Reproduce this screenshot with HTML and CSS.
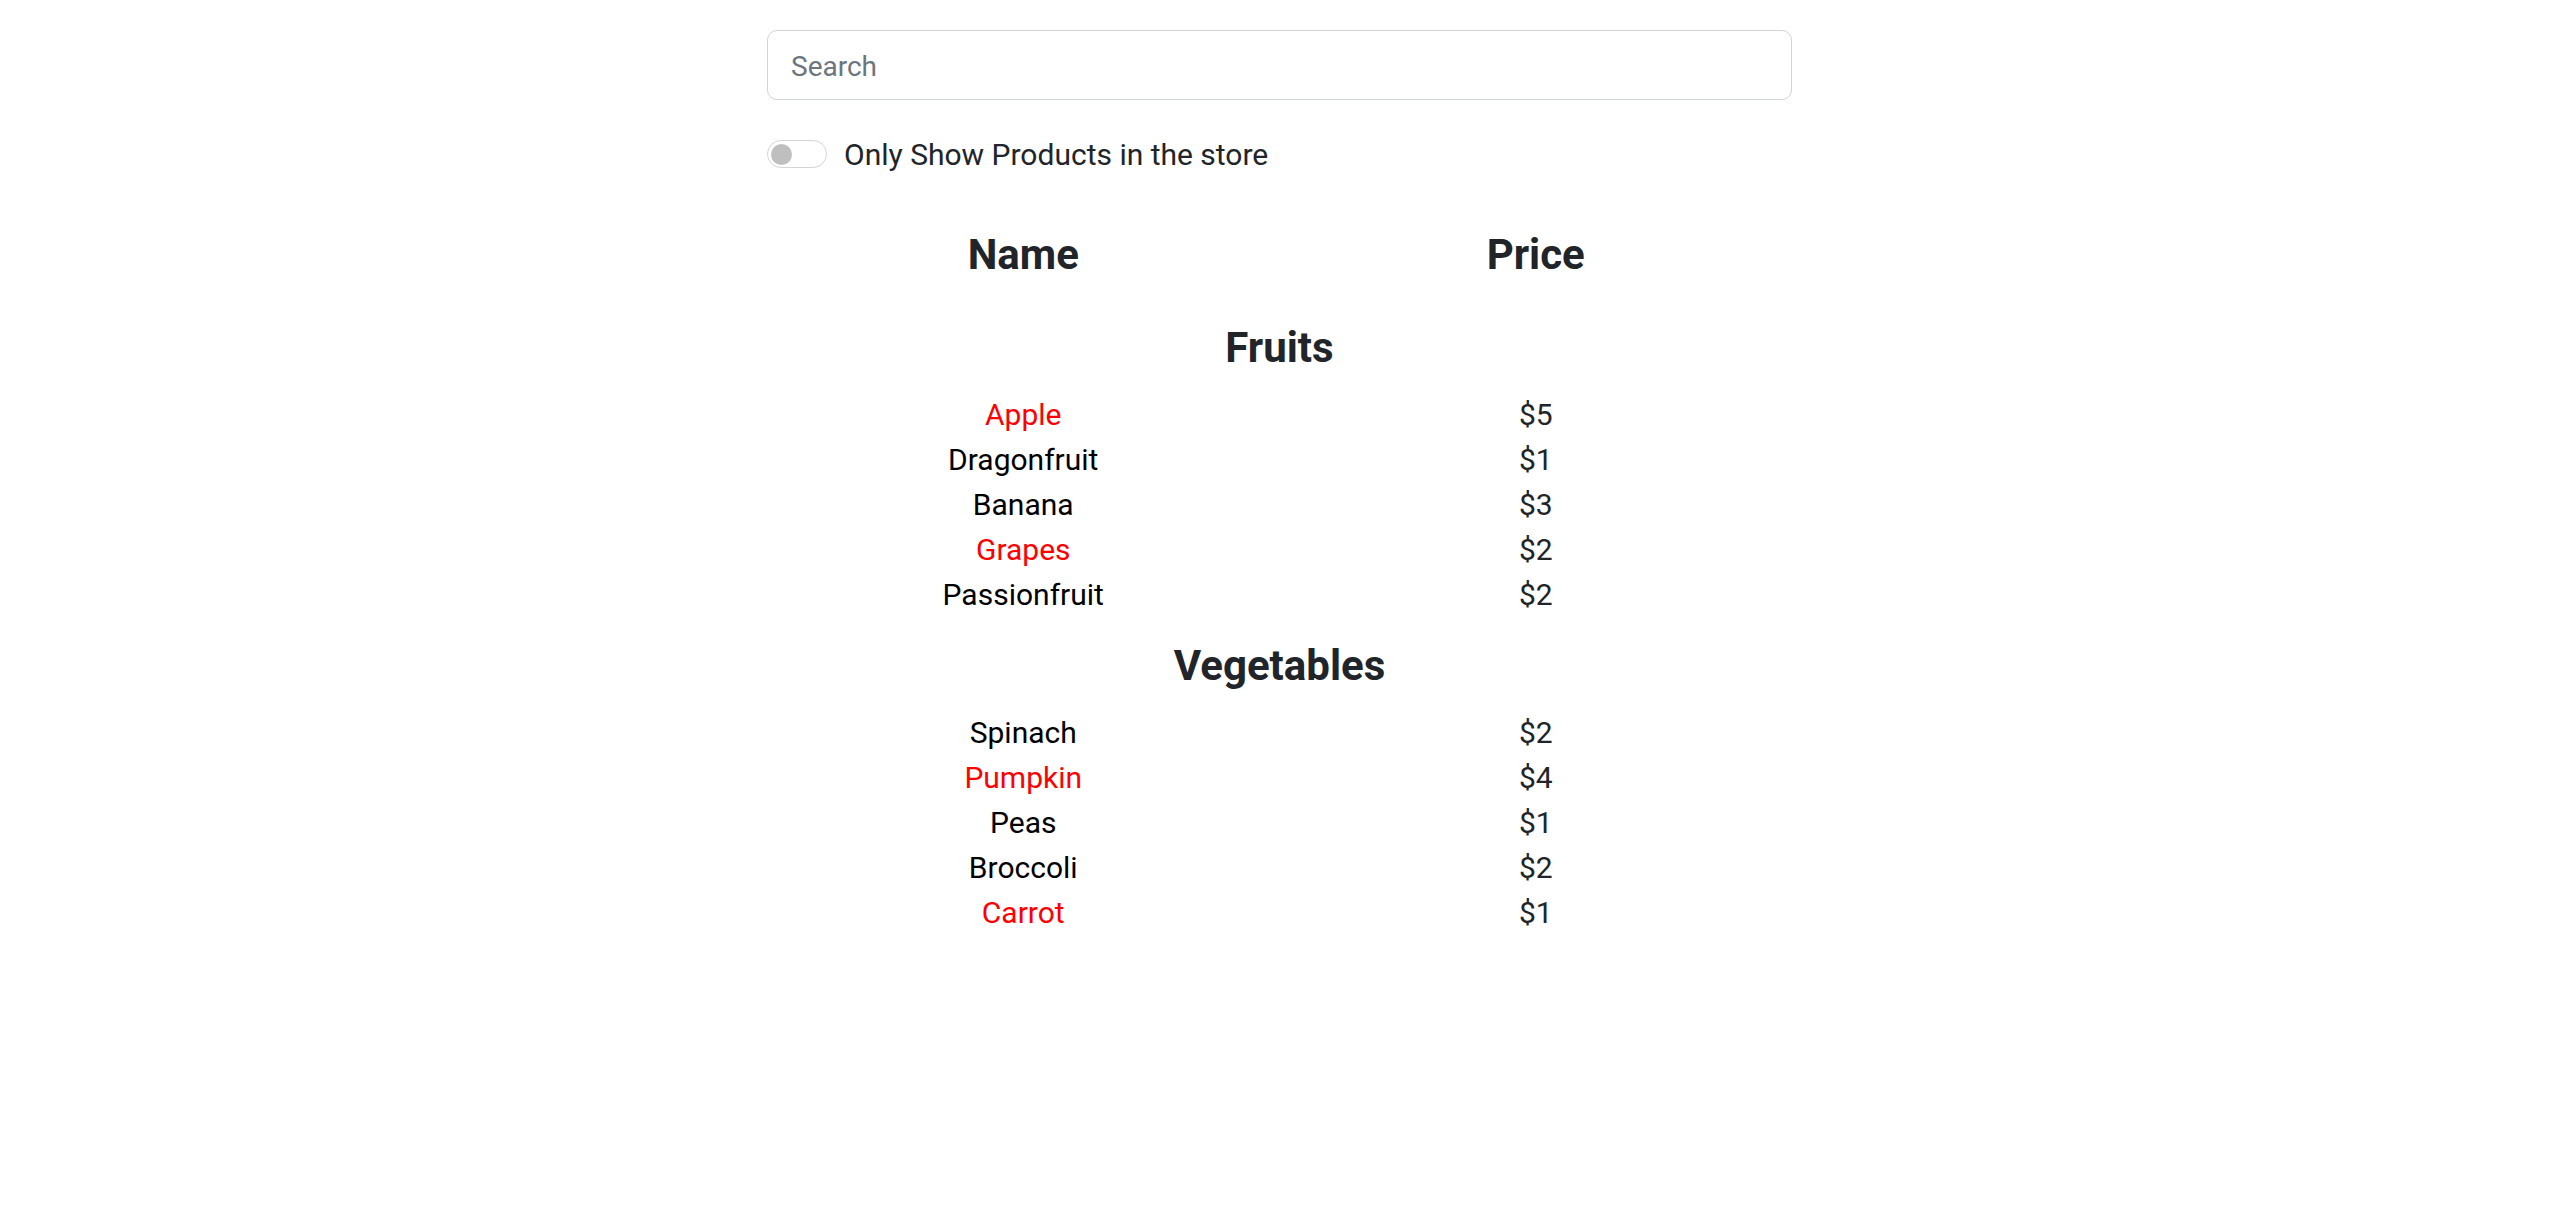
FILE: index.html
```html
<!DOCTYPE html>
<html lang="en">
<head>
<meta charset="utf-8">
<title>Products</title>
<link rel="stylesheet" href="styles.css">
</head>
<body>
<div class="app">
  <input class="search" type="text" placeholder="Search">
  <label class="toggle">
    <span class="switch"><span class="knob"></span></span>
    <span class="toggle-text">Only Show Products in the store</span>
  </label>
  <table class="products">
    <thead>
      <tr class="head"><th>Name</th><th>Price</th></tr>
    </thead>
    <tbody>
      <tr class="cat"><th colspan="2">Fruits</th></tr>
      <tr><td class="name out">Apple</td><td class="price">$5</td></tr>
      <tr><td class="name">Dragonfruit</td><td class="price">$1</td></tr>
      <tr><td class="name">Banana</td><td class="price">$3</td></tr>
      <tr><td class="name out">Grapes</td><td class="price">$2</td></tr>
      <tr><td class="name">Passionfruit</td><td class="price">$2</td></tr>
      <tr class="cat"><th colspan="2">Vegetables</th></tr>
      <tr><td class="name">Spinach</td><td class="price">$2</td></tr>
      <tr><td class="name out">Pumpkin</td><td class="price">$4</td></tr>
      <tr><td class="name">Peas</td><td class="price">$1</td></tr>
      <tr><td class="name">Broccoli</td><td class="price">$2</td></tr>
      <tr><td class="name out">Carrot</td><td class="price">$1</td></tr>
    </tbody>
  </table>
</div>
</body>
</html>
```
FILE: styles.css
```css
html, body {
  margin: 0;
  background: #fff;
}

body {
  font-family: Roboto, "Noto Sans", "Liberation Sans", sans-serif;
  color: #212529;
}

.app {
  width: 1025px;
  margin: 0 auto;
  padding-top: 30px;
}

.search {
  display: block;
  width: 100%;
  height: 70px;
  box-sizing: border-box;
  margin: 0;
  padding: 2px 23px 0;
  border: 1px solid #ced4da;
  border-radius: 10px;
  background: #fff;
  font-family: Roboto, "Noto Sans", sans-serif;
  font-size: 28px;
  color: #212529;
  outline: none;
}

.search::placeholder {
  color: #6c757d;
  opacity: 1;
}

.toggle {
  display: flex;
  align-items: center;
  gap: 17px;
  margin-top: 31.5px;
  height: 45px;
  font-size: 30px;
  line-height: 45px;
  color: #212529;
}

.switch {
  display: flex;
  align-items: center;
  width: 60px;
  height: 28px;
  box-sizing: border-box;
  padding-left: 2.5px;
  border: 1px solid #d4d4d4;
  border-radius: 14px;
  background: #fff;
}

.knob {
  width: 21px;
  height: 21px;
  border-radius: 50%;
  background: #bfbfbf;
}

.products {
  width: 100%;
  margin-top: 29px;
  border-collapse: collapse;
  table-layout: fixed;
}

.products th,
.products td {
  padding: 0;
  text-align: center;
}

.head th,
.cat th {
  font-size: 42px;
  font-weight: 700;
  line-height: 50px;
  padding: 24px 0 19px;
  color: #212529;
}

.products td {
  font-size: 30px;
  line-height: 45px;
  height: 45px;
}

.name {
  color: #000;
}

.name.out {
  color: #ff0000;
}

.price {
  color: #212529;
}
```
